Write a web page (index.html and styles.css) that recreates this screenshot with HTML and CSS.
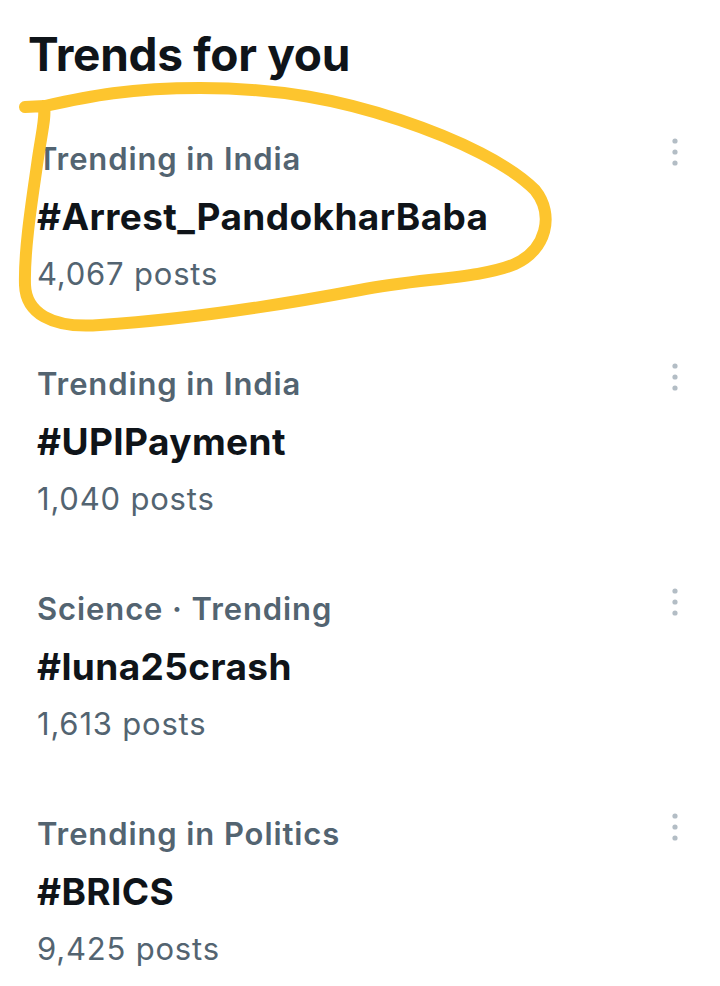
FILE: index.html
```html
<!DOCTYPE html>
<html lang="en">
<head>
    <meta charset="UTF-8">
    <meta name="viewport" content="width=device-width, initial-scale=1.0">
    <title>Trends for you</title>
    <link rel="stylesheet" href="styles.css">
</head>
<body>
    <div class="page">
        <!-- Header -->
        <h1 class="title">Trends for you</h1>

        <!-- Trend list -->
        <div class="trends">
            <div class="trend">
                <div class="trend-text">
                    <div class="trend-meta">Trending in India</div>
                    <div class="trend-tag">#Arrest_PandokharBaba</div>
                    <div class="trend-count">4,067 posts</div>
                </div>
                <button class="more" aria-label="More">
                    <svg width="6" height="28" viewBox="0 0 6 28"><circle cx="3" cy="3" r="2.6"/><circle cx="3" cy="14" r="2.6"/><circle cx="3" cy="25" r="2.6"/></svg>
                </button>
            </div>

            <div class="trend">
                <div class="trend-text">
                    <div class="trend-meta">Trending in India</div>
                    <div class="trend-tag">#UPIPayment</div>
                    <div class="trend-count">1,040 posts</div>
                </div>
                <button class="more" aria-label="More">
                    <svg width="6" height="28" viewBox="0 0 6 28"><circle cx="3" cy="3" r="2.6"/><circle cx="3" cy="14" r="2.6"/><circle cx="3" cy="25" r="2.6"/></svg>
                </button>
            </div>

            <div class="trend">
                <div class="trend-text">
                    <div class="trend-meta">Science · Trending</div>
                    <div class="trend-tag">#luna25crash</div>
                    <div class="trend-count">1,613 posts</div>
                </div>
                <button class="more" aria-label="More">
                    <svg width="6" height="28" viewBox="0 0 6 28"><circle cx="3" cy="3" r="2.6"/><circle cx="3" cy="14" r="2.6"/><circle cx="3" cy="25" r="2.6"/></svg>
                </button>
            </div>

            <div class="trend">
                <div class="trend-text">
                    <div class="trend-meta">Trending in Politics</div>
                    <div class="trend-tag">#BRICS</div>
                    <div class="trend-count">9,425 posts</div>
                </div>
                <button class="more" aria-label="More">
                    <svg width="6" height="28" viewBox="0 0 6 28"><circle cx="3" cy="3" r="2.6"/><circle cx="3" cy="14" r="2.6"/><circle cx="3" cy="25" r="2.6"/></svg>
                </button>
            </div>
        </div>

        <!-- hand drawn highlight over the first trend -->
        <svg class="scribble" width="720" height="360" viewBox="0 0 720 360">
            <path d="M25 107 L45 106 C90 96 130 88 200 88 C280 88 340 100 400 120 C460 140 510 165 535 190 C555 215 546 250 515 264 C480 279 420 278 360 290 C280 305 180 320 100 325 C50 329 26 312 25 285 C24 250 32 200 37 165 C41 135 46 118 44 106"/>
        </svg>
    </div>
</body>
</html>
```

FILE: styles.css
```css
body {
    margin: 0;
    background: #fff;
    font-family: Inter, Roboto, "Liberation Sans", sans-serif;
}

.page {
    position: relative;
    width: 720px;
    min-height: 986px;
    padding-top: 27px;
    box-sizing: border-box;
}

.title {
    margin: 0;
    padding-left: 28px;
    font-size: 46px;
    line-height: 54px;
    font-weight: 700;
    color: #0f1419;
    letter-spacing: -0.3px;
}

.trends {
    display: flex;
    flex-direction: column;
    gap: 73px;
    margin-top: 60px;
}

.trend {
    display: flex;
    justify-content: space-between;
    align-items: flex-start;
    padding: 0 35px 0 37px;
}

.trend-meta {
    font-size: 31px;
    line-height: 36px;
    font-weight: 600;
    color: #536471;
    letter-spacing: 0.9px;
}

.trend-tag {
    margin-top: 18px;
    font-size: 37px;
    line-height: 44px;
    font-weight: 700;
    color: #0f1419;
    letter-spacing: 0.4px;
}

.trend-count {
    margin-top: 16px;
    font-size: 31px;
    line-height: 38px;
    font-weight: 400;
    color: #536471;
    letter-spacing: 0.8px;
}

.more {
    display: flex;
    justify-content: center;
    width: 20px;
    margin-top: -3px;
    padding: 0;
    border: none;
    background: none;
    fill: #b3bdc5;
}

.scribble {
    position: absolute;
    top: 0;
    left: 0;
    pointer-events: none;
}

.scribble path {
    fill: none;
    stroke: #fdc52e;
    stroke-width: 12;
    stroke-linecap: round;
    stroke-linejoin: round;
}
```
